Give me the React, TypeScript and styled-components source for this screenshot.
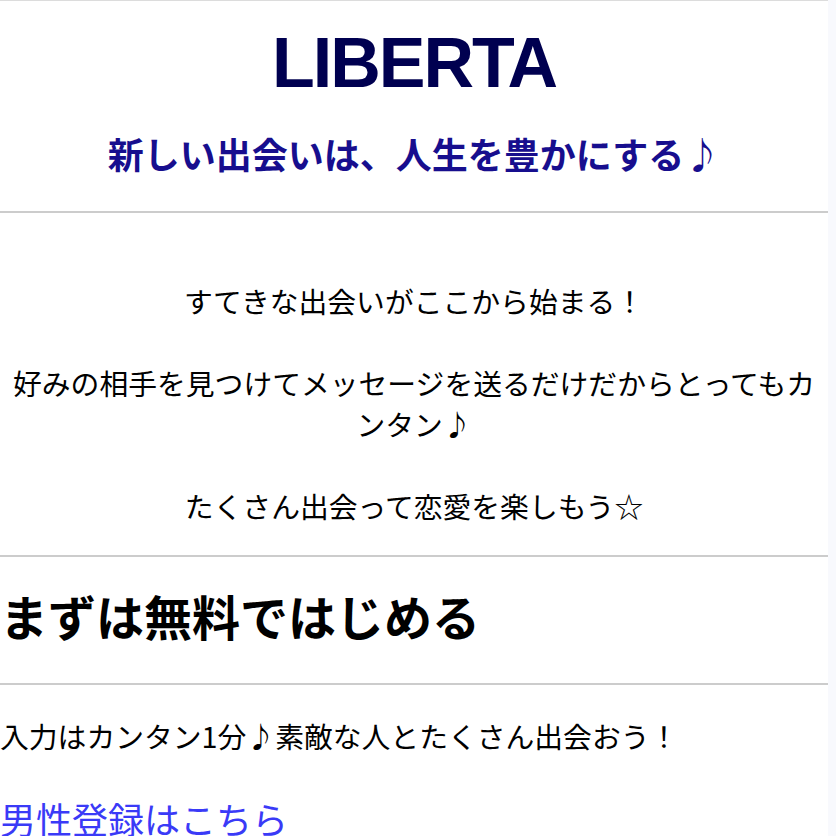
import React from "react";
import styled, { createGlobalStyle } from "styled-components";

const GlobalStyle = createGlobalStyle`
  html, body {
    margin: 0;
    padding: 0;
    background: #f8f9fd;
  }
  body {
    font-family: "Noto Sans CJK JP", "Noto Sans", sans-serif;
    color: #000;
  }
`;

const Page = styled.div`
  width: 828px;
  background: #fff;
  border-top: 1px solid #dcdcdc;
`;

const Header = styled.header`
  display: flex;
  flex-direction: column;
  align-items: center;
  padding: 27px 0 36px;
`;

const Logo = styled.h1`
  margin: 0 0 34px;
  font-family: "Liberation Sans", Arial, sans-serif;
  font-weight: 700;
  font-size: 70px;
  line-height: 70px;
  color: #000050;
  letter-spacing: -2px;
`;

const Tagline = styled.h2`
  margin: 0;
  font-family: "Noto Sans CJK JP", sans-serif;
  font-weight: 700;
  font-size: 36px;
  line-height: 43px;
  color: #170e8e;
`;

const Rule = styled.hr`
  margin: 0;
  border: 0;
  height: 2px;
  background: #cccccc;
`;

const Intro = styled.p<{ $top: number; $bottom: number }>`
  margin: 0;
  padding: ${(p) => p.$top}px 0 ${(p) => p.$bottom}px;
  text-align: center;
  font-size: 28.8px;
  line-height: 41px;
`;

const SectionTitle = styled.h2`
  margin: 0;
  padding: 30px 0 39px;
  font-weight: 700;
  font-size: 48px;
  line-height: 57px;
`;

const Body = styled.div`
  padding: 30px 0 0;
  display: flex;
  flex-direction: column;
  gap: 36px;
`;

const Lead = styled.p`
  margin: 0;
  font-size: 28.8px;
  line-height: 41px;
`;

const SignupLink = styled.a`
  font-size: 36px;
  line-height: 52px;
  color: #3a3af7;
  text-decoration: none;
`;

export default function App() {
  return (
    <>
      <GlobalStyle />
      <Page>
        <Header>
          <Logo>LIBERTA</Logo>
          <Tagline>新しい出会いは、人生を豊かにする♪</Tagline>
        </Header>
        <Rule />
        <Intro $top={67} $bottom={29}>
          すてきな出会いがここから始まる！
          <br />
          <br />
          好みの相手を見つけてメッセージを送るだけだからとってもカンタン♪
          <br />
          <br />
          たくさん出会って恋愛を楽しもう☆
        </Intro>
        <Rule />
        <SectionTitle>まずは無料ではじめる</SectionTitle>
        <Rule />
        <Body>
          <Lead>入力はカンタン1分♪素敵な人とたくさん出会おう！</Lead>
          <SignupLink href="#">男性登録はこちら</SignupLink>
        </Body>
      </Page>
    </>
  );
}
